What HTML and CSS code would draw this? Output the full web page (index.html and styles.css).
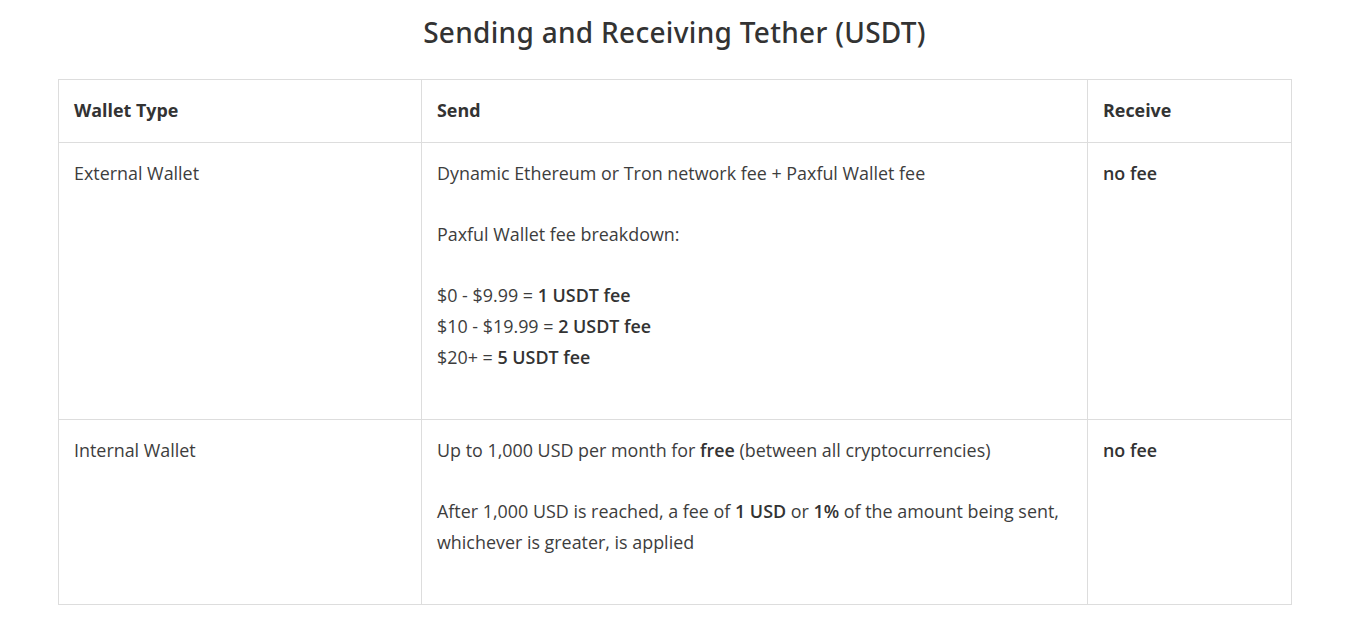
FILE: index.html
```html
<!DOCTYPE html>
<html lang="en">
<head>
<meta charset="utf-8">
<title>Sending and Receiving Tether (USDT)</title>
<link rel="stylesheet" href="styles.css">
</head>
<body>
<main class="page">
  <h2 class="title">Sending and Receiving Tether (USDT)</h2>
  <table class="fees">
    <colgroup>
      <col class="c1"><col class="c2"><col class="c3">
    </colgroup>
    <thead>
      <tr>
        <th>Wallet Type</th>
        <th>Send</th>
        <th>Receive</th>
      </tr>
    </thead>
    <tbody>
      <tr>
        <td><p>External Wallet</p></td>
        <td>
          <p>Dynamic Ethereum or Tron network fee + Paxful Wallet fee</p>
          <p>Paxful Wallet fee breakdown:</p>
          <p>$0 - $9.99 = <strong>1 USDT fee</strong><br>$10 - $19.99 = <strong>2 USDT fee</strong><br>$20+ = <strong>5 USDT fee</strong></p>
        </td>
        <td><p><strong>no fee</strong></p></td>
      </tr>
      <tr>
        <td><p>Internal Wallet</p></td>
        <td>
          <p>Up to 1,000 USD per month for <strong>free</strong> (between all cryptocurrencies)</p>
          <p>After 1,000 USD is reached, a fee of <strong>1 USD</strong> or <strong>1%</strong> of the amount being sent, whichever is greater, is applied</p>
        </td>
        <td><p><strong>no fee</strong></p></td>
      </tr>
    </tbody>
  </table>
</main>
</body>
</html>
```
FILE: styles.css
```css
html, body {
  margin: 0;
  padding: 0;
  background: #ffffff;
}
body {
  font-family: "Open Sans", "Liberation Sans", sans-serif;
  color: #3d3d3d;
  font-size: 17.9px;
  line-height: 31px;
}
.page {
  padding: 14px 55px 0 58px;
}
.title {
  margin: 0 0 29px 0;
  text-align: center;
  font-family: "Noto Sans", "Open Sans", sans-serif;
  font-weight: 500;
  font-size: 28px;
  line-height: 36px;
  letter-spacing: 0.3px;
  color: #333333;
}
.fees {
  width: 1233px;
  border-collapse: collapse;
  table-layout: fixed;
}
.c1 { width: 363px; }
.c2 { width: 666px; }
.c3 { width: 204px; }
.fees th,
.fees td {
  border: 1px solid #dddddd;
  padding: 15px 15px 16px 15px;
  text-align: left;
  vertical-align: top;
}
.fees th {
  font-weight: 700;
  color: #333333;
}
.fees p {
  margin: 0 0 30px 0;
}
.fees strong {
  font-weight: 600;
  color: #333333;
}
```
